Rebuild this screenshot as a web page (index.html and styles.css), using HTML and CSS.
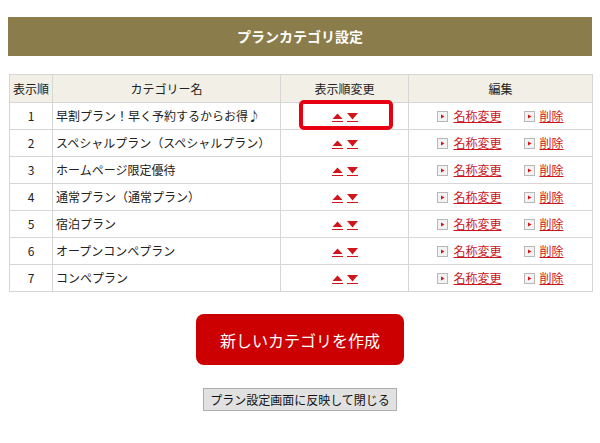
FILE: index.html
```html
<!DOCTYPE html>
<html lang="ja">
<head>
<meta charset="utf-8">
<title>プランカテゴリ設定</title>
<link rel="stylesheet" href="styles.css">
</head>
<body>
<div class="page">
  <h1 class="title-bar">プランカテゴリ設定</h1>
  <table class="cat-table">
    <colgroup>
      <col class="c-order"><col class="c-name"><col class="c-move"><col class="c-edit">
    </colgroup>
    <thead>
      <tr><th>表示順</th><th>カテゴリー名</th><th>表示順変更</th><th>編集</th></tr>
    </thead>
    <tbody>
      <tr>
        <td class="num">1</td><td class="name">早割プラン！早く予約するからお得♪</td>
        <td class="move current"><span class="highlight"></span><a href="#" class="arrow" title="上へ"><svg viewBox="0 0 11 9" width="11" height="9"><path d="M0.5 6 L5.5 0.5 L10.5 6Z" fill="#d0161b"/><rect x="0" y="8" width="11" height="1" fill="#d0161b"/></svg></a><a href="#" class="arrow" title="下へ"><svg viewBox="0 0 11 9" width="11" height="9"><rect x="0.5" y="0" width="10" height="1" fill="#d0161b"/><path d="M0.5 0.5 L10.5 0.5 L5.5 6.5Z" fill="#d0161b"/><rect x="0" y="8" width="11" height="1" fill="#d0161b"/></svg></a></td>
        <td class="edit"><span class="ico"><svg viewBox="0 0 11 11" width="11" height="11"><rect x="0.5" y="0.5" width="10" height="10" fill="#f3f3f3" stroke="#b8b8b8"/><path d="M4 3.5 L7.5 5.5 L4 7.5Z" fill="#d0161b"/></svg></span><a href="#">名称変更</a><span class="ico gap"><svg viewBox="0 0 11 11" width="11" height="11"><rect x="0.5" y="0.5" width="10" height="10" fill="#f3f3f3" stroke="#b8b8b8"/><path d="M4 3.5 L7.5 5.5 L4 7.5Z" fill="#d0161b"/></svg></span><a href="#">削除</a></td>
      </tr>
      <tr>
        <td class="num">2</td><td class="name">スペシャルプラン（スペシャルプラン）</td>
        <td class="move"><a href="#" class="arrow" title="上へ"><svg viewBox="0 0 11 9" width="11" height="9"><path d="M0.5 6 L5.5 0.5 L10.5 6Z" fill="#d0161b"/><rect x="0" y="8" width="11" height="1" fill="#d0161b"/></svg></a><a href="#" class="arrow" title="下へ"><svg viewBox="0 0 11 9" width="11" height="9"><rect x="0.5" y="0" width="10" height="1" fill="#d0161b"/><path d="M0.5 0.5 L10.5 0.5 L5.5 6.5Z" fill="#d0161b"/><rect x="0" y="8" width="11" height="1" fill="#d0161b"/></svg></a></td>
        <td class="edit"><span class="ico"><svg viewBox="0 0 11 11" width="11" height="11"><rect x="0.5" y="0.5" width="10" height="10" fill="#f3f3f3" stroke="#b8b8b8"/><path d="M4 3.5 L7.5 5.5 L4 7.5Z" fill="#d0161b"/></svg></span><a href="#">名称変更</a><span class="ico gap"><svg viewBox="0 0 11 11" width="11" height="11"><rect x="0.5" y="0.5" width="10" height="10" fill="#f3f3f3" stroke="#b8b8b8"/><path d="M4 3.5 L7.5 5.5 L4 7.5Z" fill="#d0161b"/></svg></span><a href="#">削除</a></td>
      </tr>
      <tr>
        <td class="num">3</td><td class="name">ホームページ限定優待</td>
        <td class="move"><a href="#" class="arrow" title="上へ"><svg viewBox="0 0 11 9" width="11" height="9"><path d="M0.5 6 L5.5 0.5 L10.5 6Z" fill="#d0161b"/><rect x="0" y="8" width="11" height="1" fill="#d0161b"/></svg></a><a href="#" class="arrow" title="下へ"><svg viewBox="0 0 11 9" width="11" height="9"><rect x="0.5" y="0" width="10" height="1" fill="#d0161b"/><path d="M0.5 0.5 L10.5 0.5 L5.5 6.5Z" fill="#d0161b"/><rect x="0" y="8" width="11" height="1" fill="#d0161b"/></svg></a></td>
        <td class="edit"><span class="ico"><svg viewBox="0 0 11 11" width="11" height="11"><rect x="0.5" y="0.5" width="10" height="10" fill="#f3f3f3" stroke="#b8b8b8"/><path d="M4 3.5 L7.5 5.5 L4 7.5Z" fill="#d0161b"/></svg></span><a href="#">名称変更</a><span class="ico gap"><svg viewBox="0 0 11 11" width="11" height="11"><rect x="0.5" y="0.5" width="10" height="10" fill="#f3f3f3" stroke="#b8b8b8"/><path d="M4 3.5 L7.5 5.5 L4 7.5Z" fill="#d0161b"/></svg></span><a href="#">削除</a></td>
      </tr>
      <tr>
        <td class="num">4</td><td class="name">通常プラン（通常プラン）</td>
        <td class="move"><a href="#" class="arrow" title="上へ"><svg viewBox="0 0 11 9" width="11" height="9"><path d="M0.5 6 L5.5 0.5 L10.5 6Z" fill="#d0161b"/><rect x="0" y="8" width="11" height="1" fill="#d0161b"/></svg></a><a href="#" class="arrow" title="下へ"><svg viewBox="0 0 11 9" width="11" height="9"><rect x="0.5" y="0" width="10" height="1" fill="#d0161b"/><path d="M0.5 0.5 L10.5 0.5 L5.5 6.5Z" fill="#d0161b"/><rect x="0" y="8" width="11" height="1" fill="#d0161b"/></svg></a></td>
        <td class="edit"><span class="ico"><svg viewBox="0 0 11 11" width="11" height="11"><rect x="0.5" y="0.5" width="10" height="10" fill="#f3f3f3" stroke="#b8b8b8"/><path d="M4 3.5 L7.5 5.5 L4 7.5Z" fill="#d0161b"/></svg></span><a href="#">名称変更</a><span class="ico gap"><svg viewBox="0 0 11 11" width="11" height="11"><rect x="0.5" y="0.5" width="10" height="10" fill="#f3f3f3" stroke="#b8b8b8"/><path d="M4 3.5 L7.5 5.5 L4 7.5Z" fill="#d0161b"/></svg></span><a href="#">削除</a></td>
      </tr>
      <tr>
        <td class="num">5</td><td class="name">宿泊プラン</td>
        <td class="move"><a href="#" class="arrow" title="上へ"><svg viewBox="0 0 11 9" width="11" height="9"><path d="M0.5 6 L5.5 0.5 L10.5 6Z" fill="#d0161b"/><rect x="0" y="8" width="11" height="1" fill="#d0161b"/></svg></a><a href="#" class="arrow" title="下へ"><svg viewBox="0 0 11 9" width="11" height="9"><rect x="0.5" y="0" width="10" height="1" fill="#d0161b"/><path d="M0.5 0.5 L10.5 0.5 L5.5 6.5Z" fill="#d0161b"/><rect x="0" y="8" width="11" height="1" fill="#d0161b"/></svg></a></td>
        <td class="edit"><span class="ico"><svg viewBox="0 0 11 11" width="11" height="11"><rect x="0.5" y="0.5" width="10" height="10" fill="#f3f3f3" stroke="#b8b8b8"/><path d="M4 3.5 L7.5 5.5 L4 7.5Z" fill="#d0161b"/></svg></span><a href="#">名称変更</a><span class="ico gap"><svg viewBox="0 0 11 11" width="11" height="11"><rect x="0.5" y="0.5" width="10" height="10" fill="#f3f3f3" stroke="#b8b8b8"/><path d="M4 3.5 L7.5 5.5 L4 7.5Z" fill="#d0161b"/></svg></span><a href="#">削除</a></td>
      </tr>
      <tr>
        <td class="num">6</td><td class="name">オープンコンペプラン</td>
        <td class="move"><a href="#" class="arrow" title="上へ"><svg viewBox="0 0 11 9" width="11" height="9"><path d="M0.5 6 L5.5 0.5 L10.5 6Z" fill="#d0161b"/><rect x="0" y="8" width="11" height="1" fill="#d0161b"/></svg></a><a href="#" class="arrow" title="下へ"><svg viewBox="0 0 11 9" width="11" height="9"><rect x="0.5" y="0" width="10" height="1" fill="#d0161b"/><path d="M0.5 0.5 L10.5 0.5 L5.5 6.5Z" fill="#d0161b"/><rect x="0" y="8" width="11" height="1" fill="#d0161b"/></svg></a></td>
        <td class="edit"><span class="ico"><svg viewBox="0 0 11 11" width="11" height="11"><rect x="0.5" y="0.5" width="10" height="10" fill="#f3f3f3" stroke="#b8b8b8"/><path d="M4 3.5 L7.5 5.5 L4 7.5Z" fill="#d0161b"/></svg></span><a href="#">名称変更</a><span class="ico gap"><svg viewBox="0 0 11 11" width="11" height="11"><rect x="0.5" y="0.5" width="10" height="10" fill="#f3f3f3" stroke="#b8b8b8"/><path d="M4 3.5 L7.5 5.5 L4 7.5Z" fill="#d0161b"/></svg></span><a href="#">削除</a></td>
      </tr>
      <tr>
        <td class="num">7</td><td class="name">コンペプラン</td>
        <td class="move"><a href="#" class="arrow" title="上へ"><svg viewBox="0 0 11 9" width="11" height="9"><path d="M0.5 6 L5.5 0.5 L10.5 6Z" fill="#d0161b"/><rect x="0" y="8" width="11" height="1" fill="#d0161b"/></svg></a><a href="#" class="arrow" title="下へ"><svg viewBox="0 0 11 9" width="11" height="9"><rect x="0.5" y="0" width="10" height="1" fill="#d0161b"/><path d="M0.5 0.5 L10.5 0.5 L5.5 6.5Z" fill="#d0161b"/><rect x="0" y="8" width="11" height="1" fill="#d0161b"/></svg></a></td>
        <td class="edit"><span class="ico"><svg viewBox="0 0 11 11" width="11" height="11"><rect x="0.5" y="0.5" width="10" height="10" fill="#f3f3f3" stroke="#b8b8b8"/><path d="M4 3.5 L7.5 5.5 L4 7.5Z" fill="#d0161b"/></svg></span><a href="#">名称変更</a><span class="ico gap"><svg viewBox="0 0 11 11" width="11" height="11"><rect x="0.5" y="0.5" width="10" height="10" fill="#f3f3f3" stroke="#b8b8b8"/><path d="M4 3.5 L7.5 5.5 L4 7.5Z" fill="#d0161b"/></svg></span><a href="#">削除</a></td>
      </tr>
    </tbody>
  </table>
  <div class="actions">
    <a href="#" class="btn-create">新しいカテゴリを作成</a>
    <button type="button" class="btn-close">プラン設定画面に反映して閉じる</button>
  </div>
</div>
</body>
</html>
```

FILE: styles.css
```css
html, body {
  margin: 0;
  padding: 0;
  background: #fff;
}
body {
  font-family: "Noto Sans CJK JP", "Noto Sans", sans-serif;
  font-size: 12px;
  color: #222;
}
.page {
  padding: 17px 8px 0 8px;
}
.title-bar {
  margin: 0;
  height: 39px;
  line-height: 39px;
  background: #8b7c4c;
  color: #fff;
  font-size: 14px;
  font-weight: bold;
  text-align: center;
}
.cat-table {
  margin: 18px 0 0 1px;
  width: 583px;
  border-collapse: collapse;
  table-layout: fixed;
  border: 1px solid #d6d6d6;
}
.c-order { width: 43px; }
.c-name { width: 228px; }
.c-move { width: 128px; }
.c-edit { width: 184px; }
.cat-table th,
.cat-table td {
  border: 1px solid #d6d6d6;
  height: 26px;
  padding: 0;
  line-height: 16px;
  font-weight: normal;
  vertical-align: middle;
}
.cat-table th {
  background: #f1efe6;
  height: 27px;
  text-align: center;
}
.cat-table td.num {
  text-align: center;
}
.cat-table td.name {
  padding-left: 3px;
  white-space: nowrap;
}
.cat-table td.move {
  text-align: center;
  white-space: nowrap;
  font-size: 0;
  line-height: 0;
}
.cat-table td.move.current {
  position: relative;
}
.highlight {
  position: absolute;
  left: 18px;
  top: -3px;
  width: 94px;
  height: 30px;
  box-sizing: border-box;
  border: 4px solid #e60012;
  border-radius: 5px;
}
.arrow {
  display: inline-block;
  width: 11px;
  height: 9px;
  margin: 2px 2px 0 2px;
  vertical-align: middle;
}
.arrow svg { display: block; }
.cat-table td.edit {
  text-align: center;
  white-space: nowrap;
}
.ico {
  display: inline-block;
  width: 11px;
  height: 11px;
  vertical-align: -1px;
  margin-right: 5px;
}
.ico svg { display: block; }
.ico.gap { margin-left: 22px; }
.edit a {
  color: #c8161d;
  text-decoration: underline;
}
.actions {
  display: flex;
  flex-direction: column;
  align-items: center;
  padding-top: 22px;
}
.btn-create {
  display: flex;
  align-items: center;
  justify-content: center;
  width: 208px;
  height: 51px;
  background: #cc0000;
  color: #fff;
  font-size: 16px;
  text-decoration: none;
  border-radius: 8px;
}
.btn-close {
  margin-top: 23px;
  width: 194px;
  height: 23px;
  padding: 0;
  background: #e1e1e1;
  border: 1px solid #adadad;
  font-family: "Noto Sans CJK JP", "Noto Sans", sans-serif;
  font-size: 12px;
  color: #111;
}
```
